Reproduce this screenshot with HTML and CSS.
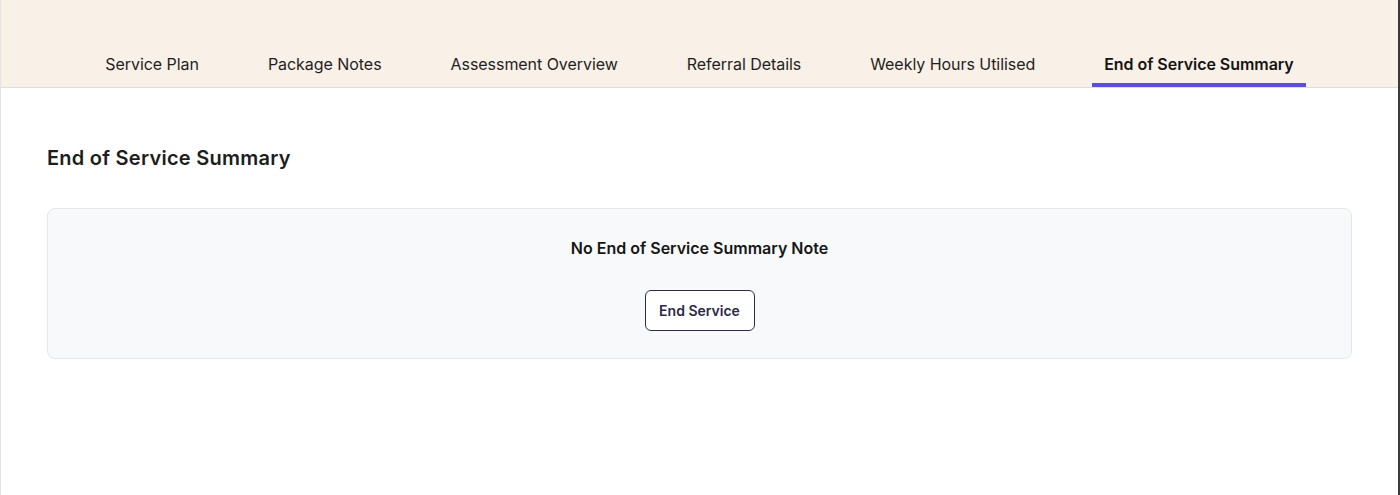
FILE: index.html
```html
<!DOCTYPE html>
<html lang="en">
<head>
<meta charset="utf-8">
<title>End of Service Summary</title>
<link rel="stylesheet" href="styles.css">
</head>
<body>
<div class="page">
  <header class="tabbar">
    <nav class="tabs">
      <a class="tab">Service Plan</a>
      <a class="tab">Package Notes</a>
      <a class="tab">Assessment Overview</a>
      <a class="tab">Referral Details</a>
      <a class="tab">Weekly Hours Utilised</a>
      <a class="tab tab-active">End of Service Summary</a>
    </nav>
  </header>
  <main class="content">
    <h1 class="title">End of Service Summary</h1>
    <section class="empty-card">
      <h2 class="empty-title">No End of Service Summary Note</h2>
      <button class="btn-outline" type="button">End Service</button>
    </section>
  </main>
</div>
</body>
</html>
```
FILE: styles.css
```css
* { box-sizing: border-box; }
html, body { margin: 0; padding: 0; background: #fff; }
body {
  font-family: Inter, "Noto Sans", "Liberation Sans", sans-serif;
  color: #1c1c1c;
}
.page {
  min-height: 495px;
  border-left: 1px solid #e3e3e3;
  border-right: 2px solid #3a3a3a;
}
.tabbar {
  background: #f9f0e7;
  height: 88px;
  border-bottom: 1px solid #e2dcd4;
  display: flex;
  align-items: flex-end;
  justify-content: center;
}
.tabs {
  display: flex;
  gap: 45px;
  margin-left: 0;
}
.tab {
  font-size: 16px;
  line-height: 24px;
  padding: 0 12px 7px;
  border-bottom: 4px solid transparent;
  color: #1f1f1f;
  letter-spacing: -0.05px;
  white-space: nowrap;
}
.tab-active {
  font-weight: 600;
  border-bottom-color: #5b4fd8;
  color: #141414;
}
.content {
  padding: 56px 46px 0;
}
.title {
  margin: 0 0 36px;
  font-size: 20px;
  line-height: 28px;
  font-weight: 600;
  letter-spacing: 0.25px;
  color: #1d1d1d;
}
.empty-card {
  background: #f8f9fb;
  border: 1px solid #e4e6ea;
  border-radius: 8px;
  padding: 27px 20px 27px;
  display: flex;
  flex-direction: column;
  align-items: center;
  gap: 30px;
}
.empty-title {
  margin: 0;
  font-size: 16px;
  line-height: 24px;
  font-weight: 600;
  color: #161616;
}
.btn-outline {
  font-family: inherit;
  font-size: 14px;
  font-weight: 600;
  color: #2b2848;
  background: #fff;
  border: 1px solid #2f2c48;
  border-radius: 6px;
  width: 110px;
  height: 41px;
  padding: 0;
  cursor: pointer;
}
```
